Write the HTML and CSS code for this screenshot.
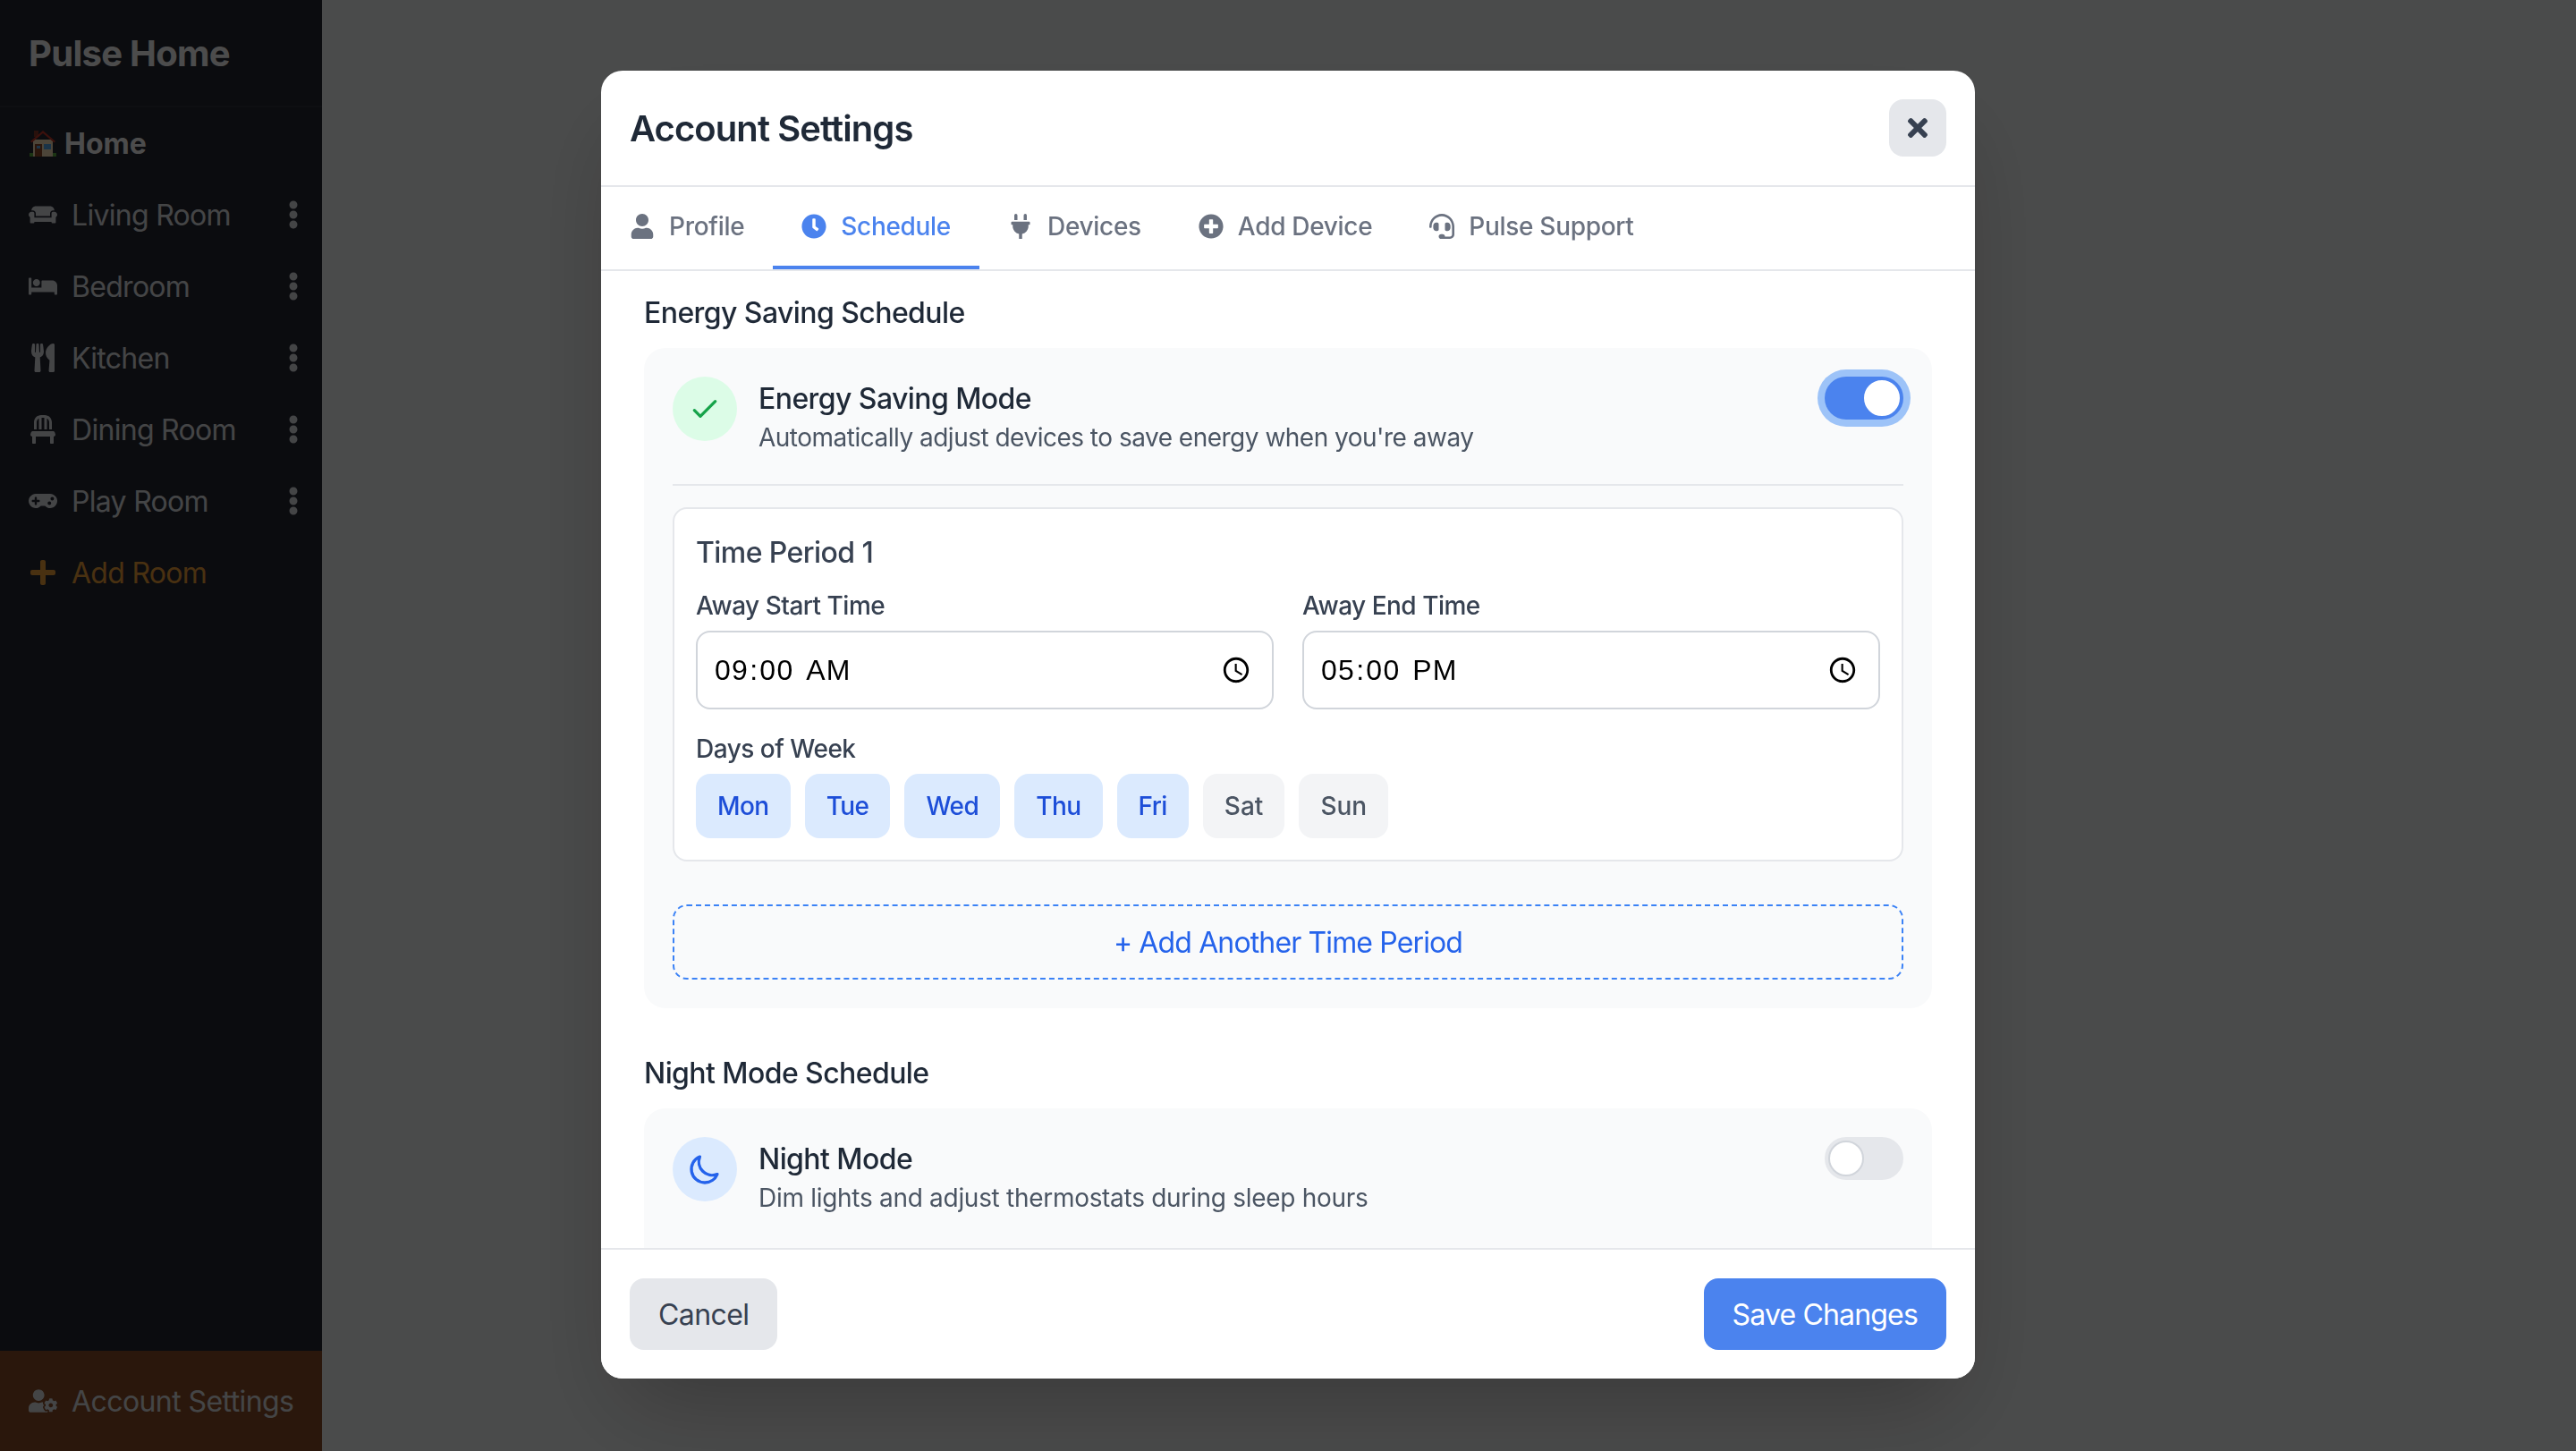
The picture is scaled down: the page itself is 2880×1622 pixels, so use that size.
FILE: index.html
```html
<!DOCTYPE html>
<html lang="en">
<head>
    <meta charset="UTF-8">
    <meta name="viewport" content="width=device-width, initial-scale=1.0">
    <title>Pulse Home</title>
    <link rel="stylesheet" href="styles.css">
</head>
<body>

    <!-- Icon sprite -->
    <svg class="sprite" xmlns="http://www.w3.org/2000/svg">
        <symbol id="i-user" viewBox="0 0 448 512"><path d="M224 256c70.7 0 128-57.3 128-128S294.7 0 224 0 96 57.3 96 128s57.3 128 128 128zm89.6 32h-16.7c-22.2 10.2-46.9 16-72.9 16s-50.6-5.8-72.9-16h-16.7C60.2 288 0 348.2 0 422.4V464c0 26.5 21.5 48 48 48h352c26.5 0 48-21.5 48-48v-41.6c0-74.2-60.2-134.4-134.4-134.4z"/></symbol>
        <symbol id="i-clock" viewBox="0 0 512 512"><path d="M256,8C119,8,8,119,8,256S119,504,256,504,504,393,504,256,393,8,256,8Zm92.49,313h0l-20,25a16,16,0,0,1-22.49,2.5h0l-67-49.72a40,40,0,0,1-15-31.23V112a16,16,0,0,1,16-16h32a16,16,0,0,1,16,16V256l58,42.5A16,16,0,0,1,348.49,321Z"/></symbol>
        <symbol id="i-plug" viewBox="0 0 384 512"><path d="M320,32a32,32,0,0,0-64,0v96h64Zm48,128H16A16,16,0,0,0,0,176v32a16,16,0,0,0,16,16H32v32A160.07,160.07,0,0,0,160,412.8V512h64V412.8A160.07,160.07,0,0,0,352,256V224h16a16,16,0,0,0,16-16V176A16,16,0,0,0,368,160ZM128,32a32,32,0,0,0-64,0v96h64Z"/></symbol>
        <symbol id="i-plus-circle" viewBox="0 0 512 512"><path d="M256 8C119 8 8 119 8 256s111 248 248 248 248-111 248-248S393 8 256 8zm144 276c0 6.6-5.4 12-12 12h-92v92c0 6.6-5.4 12-12 12h-56c-6.6 0-12-5.4-12-12v-92h-92c-6.6 0-12-5.4-12-12v-56c0-6.6 5.4-12 12-12h92v-92c0-6.6 5.4-12 12-12h56c6.6 0 12 5.4 12 12v92h92c6.6 0 12 5.4 12 12v56z"/></symbol>
        <symbol id="i-headset" viewBox="0 0 512 512"><path d="M192 208c0-17.67-14.33-32-32-32h-16c-35.35 0-64 28.65-64 64v48c0 35.35 28.65 64 64 64h16c17.67 0 32-14.33 32-32V208zm176 144c35.35 0 64-28.65 64-64v-48c0-35.35-28.65-64-64-64h-16c-17.67 0-32 14.33-32 32v112c0 17.67 14.33 32 32 32h16zM256 0C113.18 0 4.58 118.83 0 256v16c0 8.84 7.16 16 16 16h16c8.84 0 16-7.16 16-16v-16c0-114.69 93.31-208 208-208s208 93.31 208 208h-.12c.08 2.43.12 165.72.12 165.72 0 23.35-18.92 42.28-42.28 42.28H320c0-26.51-21.49-48-48-48h-32c-26.51 0-48 21.49-48 48s21.49 48 48 48h181.72c49.86 0 90.28-40.42 90.28-90.28V256C507.42 118.83 398.82 0 256 0z"/></symbol>
        <symbol id="i-times" viewBox="0 0 352 512"><path d="M242.72 256l100.07-100.07c12.28-12.28 12.28-32.19 0-44.48l-22.24-22.24c-12.28-12.28-32.19-12.28-44.48 0L176 189.28 75.93 89.21c-12.28-12.28-32.19-12.28-44.48 0L9.21 111.45c-12.28 12.28-12.28 32.19 0 44.48L109.28 256 9.21 356.07c-12.28 12.28-12.28 32.19 0 44.48l22.24 22.24c12.28 12.28 32.2 12.28 44.48 0L176 322.72l100.07 100.07c12.28 12.28 32.2 12.28 44.48 0l22.24-22.24c12.28-12.28 12.28-32.19 0-44.48L242.72 256z"/></symbol>
        <symbol id="i-couch" viewBox="0 0 640 512"><path d="M160 224v64h320v-64c0-35.3 28.7-64 64-64h32c0-53-43-96-96-96H160c-53 0-96 43-96 96h32c35.3 0 64 28.7 64 64zm416-32h-32c-17.7 0-32 14.3-32 32v96H128v-96c0-17.7-14.3-32-32-32H64c-35.3 0-64 28.7-64 64 0 23.6 13 44 32 55.1V432c0 8.8 7.2 16 16 16h64c8.8 0 16-7.2 16-16v-16h384v16c0 8.8 7.2 16 16 16h64c8.8 0 16-7.2 16-16V311.1c19-11.1 32-31.5 32-55.1 0-35.3-28.7-64-64-64z"/></symbol>
        <symbol id="i-bed" viewBox="0 0 640 512"><path d="M176 256c44.11 0 80-35.89 80-80s-35.89-80-80-80-80 35.89-80 80 35.89 80 80 80zm352-128H304c-8.84 0-16 7.16-16 16v144H64V80c0-8.84-7.16-16-16-16H16C7.16 64 0 71.16 0 80v352c0 8.84 7.16 16 16 16h32c8.84 0 16-7.16 16-16v-48h512v48c0 8.84 7.16 16 16 16h32c8.84 0 16-7.16 16-16V240c0-61.86-50.14-112-112-112z"/></symbol>
        <symbol id="i-utensils" viewBox="0 0 416 512"><path d="M207.9 15.2c.8 4.7 16.1 94.5 16.1 128.8 0 52.3-27.8 89.6-68.9 104.6L168 486.7c.7 13.7-10.2 25.3-24 25.3H80c-13.7 0-24.7-11.5-24-25.3l12.9-238.1C27.7 233.6 0 196.2 0 144 0 109.6 15.3 19.9 16.1 15.2 19.3-5.1 61.4-5.4 64 16.3v141.2c1.3 3.4 15.1 3.2 16 0 1.4-25.3 7.9-139.2 8-141.8 3.3-20.8 44.7-20.8 47.9 0 .2 2.7 6.6 116.5 8 141.8.9 3.2 14.8 3.4 16 0V16.3c2.6-21.6 44.8-21.4 48-1.1zm119.2 285.7l-15 185.1c-1.2 14 9.9 26 23.9 26h56c13.3 0 24-10.7 24-24V24c0-13.2-10.7-24-24-24-82.5 0-221.4 178.5-64.9 300.9z"/></symbol>
        <symbol id="i-chair" viewBox="0 0 448 512"><path d="M112 128c0-29.5 16.2-55 40-68.9V256h48V48h48v208h48V59.1c23.8 13.9 40 39.4 40 68.9v128h48V128C384 57.3 326.7 0 256 0h-64C121.3 0 64 57.3 64 128v128h48zm334.3 213.9l-10.7-32c-4.4-13.1-16.6-21.9-30.4-21.9H42.7c-13.8 0-26 8.8-30.4 21.9l-10.7 32C-5.2 362.6 10.2 384 32 384v112c0 8.8 7.2 16 16 16h32c8.8 0 16-7.2 16-16V384h256v112c0 8.8 7.2 16 16 16h32c8.8 0 16-7.2 16-16V384c21.8 0 37.2-21.4 30.3-42.1z"/></symbol>
        <symbol id="i-gamepad" viewBox="0 0 640 512"><path d="M480.07 96H160a160 160 0 1 0 114.24 272h91.52A160 160 0 1 0 480.07 96zM248 268a12 12 0 0 1-12 12h-52v52a12 12 0 0 1-12 12h-24a12 12 0 0 1-12-12v-52H84a12 12 0 0 1-12-12v-24a12 12 0 0 1 12-12h52v-52a12 12 0 0 1 12-12h24a12 12 0 0 1 12 12v52h52a12 12 0 0 1 12 12zm216 76a40 40 0 1 1 40-40 40 40 0 0 1-40 40zm64-96a40 40 0 1 1 40-40 40 40 0 0 1-40 40z"/></symbol>
        <symbol id="i-plus" viewBox="0 0 448 512"><path d="M416 208H272V64c0-17.67-14.33-32-32-32h-32c-17.67 0-32 14.33-32 32v144H32c-17.67 0-32 14.33-32 32v32c0 17.67 14.33 32 32 32h144v144c0 17.67 14.33 32 32 32h32c17.67 0 32-14.33 32-32V304h144c17.67 0 32-14.33 32-32v-32c0-17.67-14.33-32-32-32z"/></symbol>
        <symbol id="i-dots" viewBox="0 0 192 512"><path d="M96 184c39.8 0 72 32.2 72 72s-32.2 72-72 72-72-32.2-72-72 32.2-72 72-72zM24 80c0 39.8 32.2 72 72 72s72-32.2 72-72S135.8 8 96 8 24 40.2 24 80zm0 352c0 39.8 32.2 72 72 72s72-32.2 72-72-32.2-72-72-72-72 32.2-72 72z"/></symbol>
        <symbol id="i-user-cog" viewBox="0 0 640 512"><path d="M610.5 373.3c2.6-14.1 2.6-28.5 0-42.6l25.8-14.9c3-1.7 4.3-5.2 3.3-8.5-6.7-21.6-18.2-41.2-33.2-57.4-2.3-2.5-6-3.1-9-1.4l-25.8 14.9c-10.9-9.3-23.4-16.5-36.9-21.3v-29.8c0-3.4-2.4-6.4-5.7-7.1-22.3-5-45-4.8-66.2 0-3.3.7-5.7 3.7-5.7 7.1v29.8c-13.5 4.8-26 12-36.9 21.3l-25.8-14.9c-2.9-1.7-6.7-1.1-9 1.4-15 16.2-26.5 35.8-33.2 57.4-1 3.3.4 6.8 3.3 8.5l25.8 14.9c-2.6 14.1-2.6 28.5 0 42.6l-25.8 14.9c-3 1.7-4.3 5.2-3.3 8.5 6.7 21.6 18.2 41.1 33.2 57.4 2.3 2.5 6 3.1 9 1.4l25.8-14.9c10.9 9.3 23.4 16.5 36.9 21.3v29.8c0 3.4 2.4 6.4 5.7 7.1 22.3 5 45 4.8 66.2 0 3.3-.7 5.7-3.7 5.7-7.1v-29.8c13.5-4.8 26-12 36.9-21.3l25.8 14.9c2.9 1.7 6.7 1.1 9-1.4 15-16.2 26.5-35.8 33.2-57.4 1-3.3-.4-6.8-3.3-8.5l-25.8-14.9zM496 400.5c-26.8 0-48.5-21.8-48.5-48.5s21.8-48.5 48.5-48.5 48.5 21.8 48.5 48.5-21.7 48.5-48.5 48.5zM224 256c70.7 0 128-57.3 128-128S294.7 0 224 0 96 57.3 96 128s57.3 128 128 128zm201.2 226.5c-2.3-1.2-4.6-2.6-6.8-3.9l-7.9 4.6c-6 3.4-12.8 5.3-19.6 5.3-10.9 0-21.4-4.6-28.9-12.6-18.3-19.8-32.3-43.9-40.2-69.6-5.5-17.7 1.9-36.4 17.9-45.7l7.9-4.6c-.1-2.6-.1-5.2 0-7.8l-7.9-4.6c-16-9.2-23.4-28-17.9-45.7.9-2.9 2.2-5.8 3.2-8.7-3.8-.3-7.5-1.2-11.4-1.2h-16.7c-22.2 10.2-46.9 16-72.9 16s-50.6-5.8-72.9-16h-16.7C60.2 288 0 348.2 0 422.4V464c0 26.5 21.5 48 48 48h352c10.1 0 19.5-3.2 27.2-8.5-1.2-3.8-2-7.7-2-11.8v-9.2z"/></symbol>
    </svg>

    <div class="app">
        <aside class="sidebar">
            <div class="brand">Pulse Home</div>
            <nav class="rooms">
                <a class="room room-home">
                    <svg class="house" viewBox="0 0 32 32">
                        <path fill="#8a3a2a" d="M6 2h5v7H6z"/>
                        <path fill="#ffe6c0" d="M5 12h22v19H5z"/>
                        <path fill="#c8392b" d="M16 2L2 14l1.500 1.500L16 5l12.500 10.500L30 14z"/>
                        <path fill="#8f4a2a" d="M7 17h8v14H7z"/>
                        <path fill="#5ab0f0" d="M9 19h4v3H9zM17 17h8v6h-8z"/>
                        <path fill="#5cb040" d="M1 27h4v4H1zM27 27h4v4h-4z"/>
                    </svg>
                    <span>Home</span>
                </a>
                <a class="room"><svg class="room-icon"><use href="#i-couch"/></svg><span class="room-name">Living Room</span><svg class="dots"><use href="#i-dots"/></svg></a>
                <a class="room"><svg class="room-icon"><use href="#i-bed"/></svg><span class="room-name">Bedroom</span><svg class="dots"><use href="#i-dots"/></svg></a>
                <a class="room"><svg class="room-icon"><use href="#i-utensils"/></svg><span class="room-name">Kitchen</span><svg class="dots"><use href="#i-dots"/></svg></a>
                <a class="room"><svg class="room-icon"><use href="#i-chair"/></svg><span class="room-name">Dining Room</span><svg class="dots"><use href="#i-dots"/></svg></a>
                <a class="room"><svg class="room-icon"><use href="#i-gamepad"/></svg><span class="room-name">Play Room</span><svg class="dots"><use href="#i-dots"/></svg></a>
                <a class="room room-add"><svg class="room-icon"><use href="#i-plus"/></svg><span class="room-name">Add Room</span></a>
            </nav>
            <a class="account"><svg class="room-icon"><use href="#i-user-cog"/></svg><span class="account-name">Account Settings</span></a>
        </aside>
        <main class="main"></main>
    </div>

    <div class="overlay">
        <div class="modal">
            <header class="modal-header">
                <h2>Account Settings</h2>
                <button class="close-btn" type="button"><svg><use href="#i-times"/></svg></button>
            </header>

            <div class="tabs">
                <a class="tab"><svg><use href="#i-user"/></svg>Profile</a>
                <a class="tab active"><svg><use href="#i-clock"/></svg>Schedule</a>
                <a class="tab"><svg><use href="#i-plug"/></svg>Devices</a>
                <a class="tab"><svg><use href="#i-plus-circle"/></svg>Add Device</a>
                <a class="tab"><svg><use href="#i-headset"/></svg>Pulse Support</a>
            </div>

            <div class="modal-body">
                <section class="schedule">
                    <h3>Energy Saving Schedule</h3>
                    <div class="panel">
                        <div class="mode-row has-divider">
                            <div class="mode-icon green">
                                <svg viewBox="0 0 24 24"><path d="M5 13l4 4L19 7"/></svg>
                            </div>
                            <div class="mode-text">
                                <div class="mode-title">Energy Saving Mode</div>
                                <div class="mode-desc">Automatically adjust devices to save energy when you're away</div>
                            </div>
                            <label class="toggle on"><input type="checkbox" checked><span class="knob"></span></label>
                        </div>

                        <div class="period">
                            <div class="period-title">Time Period 1</div>
                            <div class="time-grid">
                                <div>
                                    <label class="field-label" for="start1">Away Start Time</label>
                                    <input class="time-input" type="time" id="start1" value="09:00">
                                </div>
                                <div>
                                    <label class="field-label" for="end1">Away End Time</label>
                                    <input class="time-input" type="time" id="end1" value="17:00">
                                </div>
                            </div>
                            <div class="field-label days-label">Days of Week</div>
                            <div class="days">
                                <button class="day on" type="button">Mon</button>
                                <button class="day on" type="button">Tue</button>
                                <button class="day on" type="button">Wed</button>
                                <button class="day on" type="button">Thu</button>
                                <button class="day on" type="button">Fri</button>
                                <button class="day" type="button">Sat</button>
                                <button class="day" type="button">Sun</button>
                            </div>
                        </div>

                        <button class="add-period" type="button">+ Add Another Time Period</button>
                    </div>
                </section>

                <section class="schedule">
                    <h3>Night Mode Schedule</h3>
                    <div class="panel panel-tall">
                        <div class="mode-row">
                            <div class="mode-icon blue">
                                <svg viewBox="0 0 24 24"><path d="M20.354 15.354A9 9 0 018.646 3.646 9.003 9.003 0 0012 21a9.003 9.003 0 008.354-5.646z"/></svg>
                            </div>
                            <div class="mode-text">
                                <div class="mode-title">Night Mode</div>
                                <div class="mode-desc night-desc">Dim lights and adjust thermostats during sleep hours</div>
                            </div>
                            <label class="toggle"><input type="checkbox"><span class="knob"></span></label>
                        </div>
                    </div>
                </section>
            </div>

            <footer class="modal-footer">
                <button class="btn btn-cancel" type="button">Cancel</button>
                <button class="btn btn-save" type="button">Save Changes</button>
            </footer>
        </div>
    </div>

</body>
</html>
```

FILE: styles.css
```css
/* Base */
* {
    box-sizing: border-box;
    letter-spacing: -0.018em;
}

html, body {
    height: 100%;
}

body {
    margin: 0;
    font-family: Inter, "Liberation Sans", sans-serif;
    color: #1f2937;
    overflow: hidden;
}

.sprite {
    display: none;
}

svg {
    fill: currentColor;
}

/* App shell behind the dialog */
.app {
    display: flex;
    height: 100%;
    background: #f9fafb;
}

.main {
    flex: 1;
}

/* Sidebar */
.sidebar {
    width: 360px;
    display: flex;
    flex-direction: column;
    background: #252835;
    color: #e5e7eb;
}

.brand {
    height: 120px;
    padding: 0 32px;
    display: flex;
    align-items: center;
    font-size: 40px;
    font-weight: 700;
    color: #fff;
    border-bottom: 2px solid #2f323e;
}

.rooms {
    flex: 1;
}

.room {
    height: 80px;
    padding: 0 32px;
    display: flex;
    align-items: center;
    font-size: 32px;
}

.room-home {
    font-weight: 700;
    color: #fff;
}

.room-home span {
    letter-spacing: 0;
}

.house {
    width: 32px;
    height: 32px;
    margin-right: 8px;
}

.room-icon {
    width: 32px;
    height: 32px;
    margin-right: 16px;
    flex: none;
}

.room-name {
    flex: 1;
    white-space: nowrap;
    letter-spacing: -0.022em;
}

.account-name {
    white-space: nowrap;
}

.dots {
    width: 12px;
    height: 32px;
    margin-right: -6px;
}

.room-add {
    color: #f5a33a;
}

.account {
    height: 112px;
    padding: 0 32px;
    display: flex;
    align-items: center;
    font-size: 32px;
    background: #8c4d28;
}

/* Overlay and dialog */
.overlay {
    position: fixed;
    inset: 0;
    padding-bottom: 2px;
    display: flex;
    align-items: center;
    justify-content: center;
    background: rgba(0, 0, 0, 0.7);
}

.modal {
    width: 1536px;
    height: 1462px;
    display: flex;
    flex-direction: column;
    background: #fff;
    border-radius: 24px;
    box-shadow: 0 50px 100px -24px rgba(0, 0, 0, 0.25);
}

.modal-header {
    padding: 32px;
    display: flex;
    align-items: center;
    justify-content: space-between;
    border-bottom: 2px solid #e5e7eb;
}

.modal-header h2 {
    margin: 0;
    font-size: 40px;
    font-weight: 600;
    letter-spacing: -0.023em;
    color: #1f2937;
}

.close-btn {
    width: 64px;
    height: 64px;
    padding: 0;
    display: flex;
    align-items: center;
    justify-content: center;
    border: none;
    border-radius: 16px;
    background: #e5e7eb;
    color: #374151;
}

.close-btn svg {
    width: 24px;
    height: 32px;
}

/* Tabs */
.tabs {
    display: flex;
    border-bottom: 2px solid #e5e7eb;
}

.tab {
    height: 92px;
    padding: 0 32px;
    display: flex;
    align-items: center;
    gap: 16px;
    font-size: 28px;
    font-weight: 500;
    letter-spacing: -0.011em;
    color: #6b7280;
    border-bottom: 4px solid transparent;
}

.tab svg {
    width: 28px;
    height: 28px;
}

.tab.active {
    color: #4b83ee;
    border-bottom-color: #4b83ee;
}

/* Scroll area */
.modal-body {
    flex: 1;
    min-height: 0;
    overflow: hidden;
    padding: 22px 48px 0;
}

.schedule {
    margin-bottom: 48px;
}

.schedule h3 {
    margin: 0 0 14px;
    font-size: 32px;
    line-height: 50px;
    font-weight: 500;
    color: #1f2937;
}

.panel {
    padding: 32px;
    background: #f9fafb;
    border-radius: 24px;
}

/* the night card runs on under the footer */
.panel-tall {
    min-height: 260px;
}

.mode-row {
    display: flex;
    align-items: flex-start;
    gap: 24px;
}

.mode-row.has-divider {
    padding-bottom: 32px;
    margin-bottom: 24px;
    border-bottom: 2px solid #e5e7eb;
}

.mode-icon {
    width: 72px;
    height: 72px;
    flex: none;
    display: flex;
    align-items: center;
    justify-content: center;
    border-radius: 50%;
}

.mode-icon svg {
    width: 40px;
    height: 40px;
    fill: none;
    stroke: currentColor;
    stroke-width: 2;
    stroke-linecap: round;
    stroke-linejoin: round;
}

.mode-icon.green {
    background: #dcfce7;
    color: #16a34a;
}

.mode-icon.blue {
    background: #dbeafe;
    color: #2563eb;
}

.mode-text {
    flex: 1;
}

.mode-title {
    font-size: 32px;
    line-height: 50px;
    margin-bottom: -2px;
    font-weight: 500;
    color: #1f2937;
}

.mode-desc {
    font-size: 28px;
    line-height: 40px;
    color: #4b5563;
}

.night-desc {
    letter-spacing: -0.0105em;
}

/* Toggle */
.toggle {
    position: relative;
    width: 88px;
    height: 48px;
    flex: none;
    border-radius: 24px;
    background: #e5e7eb;
}

.toggle input {
    display: none;
}

.knob {
    position: absolute;
    top: 4px;
    left: 4px;
    width: 40px;
    height: 40px;
    background: #fff;
    border: 2px solid #d1d5db;
    border-radius: 50%;
}

.toggle.on {
    background: #4b83ee;
    box-shadow: 0 0 0 8px #9dc3f8;
}

.toggle.on .knob {
    left: 44px;
    border-color: #fff;
}

/* Time period card */
.period {
    padding: 24px;
    background: #fff;
    border: 2px solid #e5e7eb;
    border-radius: 16px;
}

.period-title {
    font-size: 32px;
    line-height: 50px;
    font-weight: 500;
    color: #374151;
    margin-bottom: 14px;
}

.time-grid {
    display: grid;
    grid-template-columns: 1fr 1fr;
    gap: 32px;
}

.field-label {
    display: block;
    font-size: 28px;
    line-height: 40px;
    font-weight: 500;
    color: #374151;
    margin-bottom: 8px;
}

.days-label {
    margin-top: 24px;
}

.time-input {
    width: 100%;
    height: 88px;
    padding: 0 20px 0 18px;
    font-family: "Liberation Sans", sans-serif;
    font-size: 32px;
    letter-spacing: 0.04em;
    color: #000;
    background: #fff;
    border: 2px solid #d1d5db;
    border-radius: 16px;
}

.time-input::-webkit-datetime-edit-ampm-field {
    margin-left: 4px;
}

.days {
    display: flex;
    gap: 16px;
}

.day {
    height: 72px;
    padding: 0 24px;
    font-family: inherit;
    font-size: 28px;
    font-weight: 500;
    letter-spacing: 0;
    color: #4b5563;
    background: #f3f4f6;
    border: none;
    border-radius: 16px;
}

.day.on {
    letter-spacing: -0.02em;
    color: #1d4ed8;
    background: #dbeafe;
}

.add-period {
    width: 100%;
    height: 84px;
    margin-top: 48px;
    font-family: inherit;
    font-size: 32px;
    letter-spacing: -0.027em;
    color: #2563eb;
    background: transparent;
    border: 2px dashed #3b82f6;
    border-radius: 16px;
}

/* Footer */
.modal-footer {
    padding: 32px;
    display: flex;
    justify-content: space-between;
    background: #fff;
    border-top: 2px solid #e5e7eb;
    border-radius: 0 0 24px 24px;
}

.btn {
    height: 80px;
    padding: 0 32px;
    font-family: inherit;
    font-size: 32px;
    border: none;
    border-radius: 16px;
}

.btn-cancel {
    color: #374151;
    background: #e5e7eb;
}

.btn-save {
    letter-spacing: -0.026em;
    color: #fff;
    background: #4b83ee;
}
```
